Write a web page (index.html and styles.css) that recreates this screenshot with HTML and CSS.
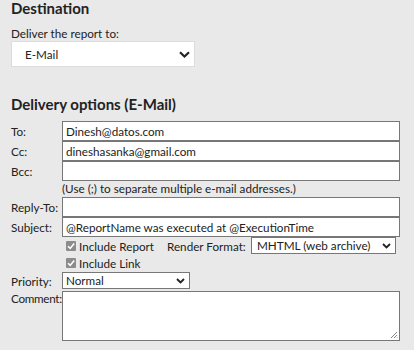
FILE: index.html
```html
<!DOCTYPE html>
<html lang="en">
<head>
  <meta charset="UTF-8">
  <title>Subscription</title>
  <meta name="viewport" content="width=device-width, initial-scale=1.0">
  <link rel="stylesheet" href="styles.css">
</head>
<body>
  <div class="page">
    <h2>Destination</h2>
    <label class="deliver-label" for="deliverTo">Deliver the report to:</label>
    <div class="big-select">
      <span>E-Mail</span>
      <svg class="chev" width="11" height="7" viewBox="0 0 11 7"><path d="M1 1.2 L5.5 5.5 L10 1.2" fill="none" stroke="#222" stroke-width="2.2"/></svg>
    </div>

    <h2 class="options-title">Delivery options (E-Mail)</h2>

    <div class="grid">
      <div class="lbl">To:</div>
      <div class="field">Dinesh@datos.com</div>

      <div class="lbl">Cc:</div>
      <div class="field">dineshasanka@gmail.com</div>

      <div class="lbl">Bcc:</div>
      <div class="field"></div>

      <div class="lbl"></div>
      <div class="hint">(Use (;) to separate multiple e-mail addresses.)</div>

      <div class="lbl">Reply-To:</div>
      <div class="field"></div>

      <div class="lbl">Subject:</div>
      <div class="field">@ReportName was executed at @ExecutionTime</div>

      <div class="lbl"></div>
      <div class="check-row">
        <span class="check"><svg width="10" height="10" viewBox="0 0 10 10"><path d="M2 5.2 L4.2 7.4 L8.2 2.6" fill="none" stroke="#fff" stroke-width="1.6"/></svg></span>
        <span class="check-text">Include Report</span>
        <span class="render-label">Render Format:</span>
        <div class="small-select format">
          <span>MHTML (web archive)</span>
          <svg class="chev" width="9" height="6" viewBox="0 0 9 6"><path d="M1 1 L4.5 4.5 L8 1" fill="none" stroke="#222" stroke-width="1.8"/></svg>
        </div>
      </div>

      <div class="lbl"></div>
      <div class="check-row link-row">
        <span class="check"><svg width="10" height="10" viewBox="0 0 10 10"><path d="M2 5.2 L4.2 7.4 L8.2 2.6" fill="none" stroke="#fff" stroke-width="1.6"/></svg></span>
        <span class="check-text">Include Link</span>
      </div>

      <div class="lbl">Priority:</div>
      <div class="priority-cell">
        <div class="small-select priority">
          <span>Normal</span>
          <svg class="chev" width="9" height="6" viewBox="0 0 9 6"><path d="M1 1 L4.5 4.5 L8 1" fill="none" stroke="#222" stroke-width="1.8"/></svg>
        </div>
      </div>

      <div class="lbl comment-lbl">Comment:</div>
      <div class="comment">
        <svg class="grip" width="8" height="8" viewBox="0 0 8 8"><path d="M7 1 L1 7 M7 4 L4 7 M7 6.5 L6.5 7" stroke="#777" stroke-width="0.9"/></svg>
      </div>
    </div>
  </div>
</body>
</html>
```

FILE: styles.css
```css
* {
  box-sizing: border-box;
}

body {
  margin: 0;
  background: #e9e9e9;
  color: #222;
  font-family: Lato, "Noto Sans", sans-serif;
  font-size: 11.7px;
}

.page {
  padding: 0 0 0 11px;
}

h2 {
  margin: 0;
  font-size: 15px;
  line-height: 16px;
  font-weight: bold;
  color: #222;
}

.deliver-label {
  display: block;
  margin-top: 10px;
  line-height: 15px;
}

.big-select {
  width: 184px;
  height: 26px;
  background: #fff;
  border: 1px solid #dcdcdc;
  display: flex;
  align-items: center;
  justify-content: space-between;
  padding: 0 3px 0 13px;
}

.big-select .chev {
  margin-right: 1px;
}

.options-title {
  margin-top: 29px;
}

.grid {
  margin-top: 9px;
  display: grid;
  grid-template-columns: 51px 338px;
}

.lbl {
  line-height: 20px;
  white-space: nowrap;
}

.field {
  height: 20px;
  background: #fff;
  border: 1px solid #777;
  padding: 0 3px;
  line-height: 18px;
  white-space: nowrap;
}

.hint {
  height: 16px;
  line-height: 14px;
  white-space: nowrap;
}

.check-row {
  display: flex;
  align-items: center;
  height: 17px;
  white-space: nowrap;
}

.link-row {
  height: 16px;
  margin-top: 1px;
}

.check {
  width: 10px;
  height: 10px;
  margin-left: 4px;
  background: #8c8c8c;
  border-radius: 1px;
  display: flex;
  flex: none;
}

.check-text {
  margin-left: 3px;
  width: 88px;
}

.render-label {
  width: 84px;
}

.small-select {
  background: #fff;
  border: 1px solid #777;
  height: 17px;
  display: flex;
  align-items: center;
  justify-content: space-between;
  padding: 0 4px 0 5px;
  line-height: 15px;
}

.format {
  width: 145px;
}

.priority-cell {
  padding-top: 1px;
}

.priority {
  width: 128px;
  padding-left: 3px;
}

.comment-lbl {
  line-height: 14px;
  letter-spacing: -0.3px;
}

.comment {
  height: 50px;
  background: #fff;
  border: 1px solid #777;
  position: relative;
}

.grip {
  position: absolute;
  right: 1px;
  bottom: 1px;
}
```
